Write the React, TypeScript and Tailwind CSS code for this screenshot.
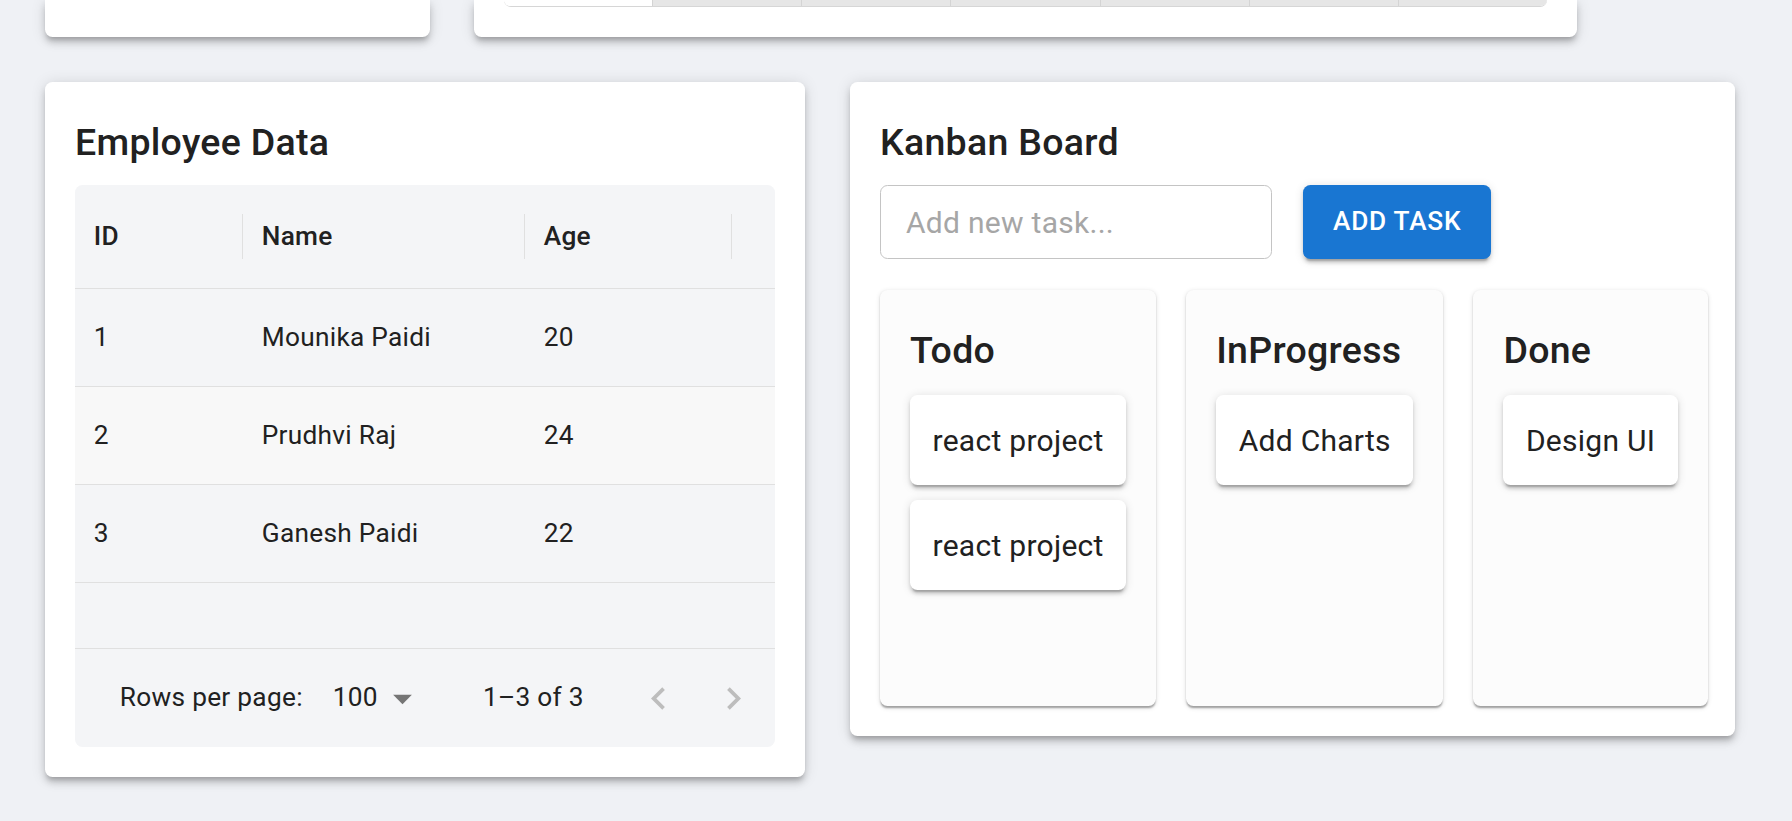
const rows = [
  { id: 1, name: "Mounika Paidi", age: 20 },
  { id: 2, name: "Prudhvi Raj", age: 24 },
  { id: 3, name: "Ganesh Paidi", age: 22 },
];

const board = [
  { title: "Todo", tasks: ["react project", "react project"] },
  { title: "InProgress", tasks: ["Add Charts"] },
  { title: "Done", tasks: ["Design UI"] },
];

const cardShadow =
  "shadow-[0_5.6px_5.6px_-3.75px_rgba(0,0,0,0.2),0_5.6px_7.5px_0_rgba(0,0,0,0.14),0_1.9px_15px_0_rgba(0,0,0,0.12)]";

function HeaderCell({ label, width }: { label: string; width: string }) {
  return (
    <div className={`flex h-full items-center justify-between pl-[18.75px] ${width}`}>
      <span className="font-medium">{label}</span>
      <div className="h-[45px] w-px bg-[#e0e0e0]" />
    </div>
  );
}

function EmployeeTable() {
  return (
    <div className="flex h-[562px] flex-col overflow-hidden rounded-[7.5px] bg-[#f4f5f7] text-[26.25px] tracking-[0.28px]">
      <div className="flex h-[104px] shrink-0 border-b border-[#e0e0e0]">
        <HeaderCell label="ID" width="w-[168px]" />
        <HeaderCell label="Name" width="w-[282px]" />
        <HeaderCell label="Age" width="w-[207px]" />
      </div>
      {rows.map((r) => (
        <div
          key={r.id}
          className={`flex h-[98px] shrink-0 items-center border-b border-[#e0e0e0] ${
            r.id === 2 ? "bg-[#f8f8f8]" : ""
          }`}
        >
          <div className="w-[168px] pl-[18.75px]">{r.id}</div>
          <div className="w-[282px] pl-[18.75px]">{r.name}</div>
          <div className="w-[207px] pl-[18.75px]">{r.age}</div>
        </div>
      ))}
      <div className="flex-1 border-b border-[#e0e0e0]" />
      <div className="flex h-[98px] shrink-0 items-center justify-end pr-[3.75px]">
        <span>Rows per page:</span>
        <div className="ml-[30px] flex items-center">
          <span>100</span>
          <svg viewBox="0 0 24 24" className="ml-[2px] h-[45px] w-[45px] fill-[#757575]">
            <path d="M7 10l5 5 5-5z" />
          </svg>
        </div>
        <span className="ml-[58px]">1–3 of 3</span>
        <div className="ml-[37.5px] flex">
          <button className="flex h-[75px] w-[75px] items-center justify-center">
            <svg viewBox="0 0 24 24" className="h-[45px] w-[45px] fill-[#bdbdbd]">
              <path d="M15.41 7.41 14 6l-6 6 6 6 1.41-1.41L10.83 12z" />
            </svg>
          </button>
          <button className="flex h-[75px] w-[75px] items-center justify-center">
            <svg viewBox="0 0 24 24" className="h-[45px] w-[45px] fill-[#bdbdbd]">
              <path d="M10 6 8.59 7.41 13.17 12l-4.58 4.59L10 18l6-6z" />
            </svg>
          </button>
        </div>
      </div>
    </div>
  );
}

function KanbanBoard() {
  return (
    <div className={`w-[885px] rounded-[7.5px] bg-white p-[30px] ${cardShadow}`}>
      <h6 className="mb-[13px] text-[37.5px] font-medium leading-[60px] tracking-[0.28px]">
        Kanban Board
      </h6>
      <div className="flex gap-[31px]">
        <input
          placeholder="Add new task..."
          className="h-[74px] w-[392px] rounded-[7.5px] border border-[#c4c4c4] px-[25px] text-[30px] tracking-[0.28px] outline-none placeholder:text-[#a6a6a6]"
        />
        <button className="h-[74px] rounded-[7.5px] bg-[#1976d2] px-[30px] text-[26.25px] font-medium uppercase tracking-[0.75px] text-white shadow-[0_5.6px_1.9px_-3.75px_rgba(0,0,0,0.2),0_3.75px_3.75px_0_rgba(0,0,0,0.14),0_1.9px_9.4px_0_rgba(0,0,0,0.12)]">
          Add Task
        </button>
      </div>
      <div className="mt-[31px] flex items-start gap-[30px]">
        {board.map((col) => (
          <div
            key={col.title}
            className="flex h-[416px] flex-col rounded-[7.5px] bg-[#fcfcfc] p-[30px] shadow-[0_3.75px_1.9px_-1.9px_rgba(0,0,0,0.2),0_1.9px_1.9px_0_rgba(0,0,0,0.14),0_1.9px_5.6px_0_rgba(0,0,0,0.12)]"
          >
            <h6 className="mb-[15px] whitespace-nowrap text-[37.5px] font-medium leading-[60px] tracking-[0.28px]">
              {col.title}
            </h6>
            <div className="flex flex-col gap-[15px]">
              {col.tasks.map((t, i) => (
                <div
                  key={i}
                  className="whitespace-nowrap rounded-[7.5px] bg-white p-[22.5px] text-[30px] leading-[45px] tracking-[0.28px] shadow-[0_5.6px_1.9px_-3.75px_rgba(0,0,0,0.2),0_3.75px_3.75px_0_rgba(0,0,0,0.14),0_1.9px_9.4px_0_rgba(0,0,0,0.12)]"
                >
                  {t}
                </div>
              ))}
            </div>
          </div>
        ))}
      </div>
    </div>
  );
}

export default function App() {
  return (
    <div className="min-h-screen bg-[#eff1f5] px-[45px] pb-[45px] font-['Roboto',sans-serif] text-[#212121]">
      <div className="flex gap-[44px]">
        <div className={`h-[37px] w-[385px] rounded-b-[7.5px] bg-white ${cardShadow}`} />
        <div
          className={`flex h-[37px] w-[1103px] flex-col justify-end rounded-b-[7.5px] bg-white px-[30px] pb-[30px] ${cardShadow}`}
        >
          <div className="flex h-[7px] overflow-hidden rounded-b-[7.5px] border-b border-[#d6d6d6]">
            <div className="flex-1 bg-white" />
            {[0, 1, 2, 3, 4, 5].map((i) => (
              <div key={i} className="flex-1 border-l border-[#d4d4d4] bg-[#e6e6e6]" />
            ))}
          </div>
        </div>
      </div>

      <div className="mt-[45px] flex items-start gap-[45px]">
        <div className={`w-[760px] rounded-[7.5px] bg-white p-[30px] ${cardShadow}`}>
          <h6 className="mb-[13px] text-[37.5px] font-medium leading-[60px] tracking-[0.28px]">
            Employee Data
          </h6>
          <EmployeeTable />
        </div>
        <KanbanBoard />
      </div>
    </div>
  );
}
